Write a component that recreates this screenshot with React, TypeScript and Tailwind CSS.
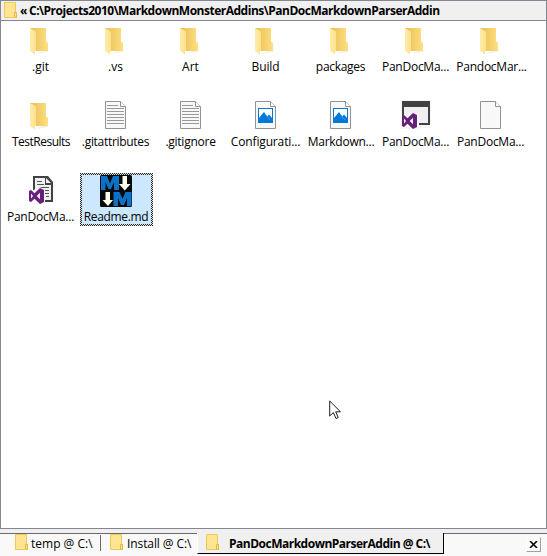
import React from "react";

type Kind = "folder" | "text" | "image" | "solution" | "blank" | "project" | "monster";

const items: { name: string; kind: Kind; spacing: string }[] = [
  { name: ".git", kind: "folder", spacing: "tracking-[0px]" },
  { name: ".vs", kind: "folder", spacing: "tracking-[0px]" },
  { name: "Art", kind: "folder", spacing: "tracking-[0px]" },
  { name: "Build", kind: "folder", spacing: "tracking-[-0.1px]" },
  { name: "packages", kind: "folder", spacing: "tracking-[-0.3px]" },
  { name: "PanDocMa...", kind: "folder", spacing: "tracking-[-0.25px]" },
  { name: "PandocMar...", kind: "folder", spacing: "tracking-[-0.25px] pl-0.5" },
  { name: "TestResults", kind: "folder", spacing: "tracking-[-0.5px] pl-px" },
  { name: ".gitattributes", kind: "text", spacing: "tracking-[-0.3px]" },
  { name: ".gitignore", kind: "text", spacing: "tracking-[-0.25px]" },
  { name: "Configurati...", kind: "image", spacing: "tracking-[-0.15px]" },
  { name: "Markdown...", kind: "image", spacing: "tracking-[-0.25px] pl-px" },
  { name: "PanDocMa...", kind: "solution", spacing: "tracking-[-0.25px]" },
  { name: "PanDocMa...", kind: "blank", spacing: "tracking-[-0.25px]" },
  { name: "PanDocMa...", kind: "project", spacing: "tracking-[-0.25px]" },
  { name: "Readme.md", kind: "monster", spacing: "tracking-[-0.35px] pl-px" },
];

function Sheet() {
  return (
    <>
      <path d="M5.5 1.5H20.5L25.5 6.5V28.5H5.5Z" fill="#f8f8f8" stroke="#929292" />
      <path d="M20.5 1.5V6.5H25.5" fill="#fff" stroke="#929292" />
    </>
  );
}

function Ribbon() {
  return (
    <path
      fillRule="evenodd"
      fill="#68217a"
      d="M13 13L17 15V27L13 29L7.5 23.8L4 27L2 26V16L4 15L7.5 18.2ZM13 17.8L9.7 21L13 24.2ZM4 18.5V23.5L6 21Z"
    />
  );
}

function ItemIcon({ kind }: { kind: Kind }) {
  return (
    <svg viewBox="0 0 32 32" className="ml-5 block size-8 shrink-0">
      {kind === "folder" && (
        <>
          <defs>
            <linearGradient id="back" x1="0" x2="1">
              <stop offset="0" stopColor="#e6bd55" />
              <stop offset="1" stopColor="#ffdf80" />
            </linearGradient>
            <linearGradient id="flap" x1="0" x2="1">
              <stop offset="0" stopColor="#ffebaa" />
              <stop offset="1" stopColor="#ffe18c" />
            </linearGradient>
          </defs>
          <path d="M11 29L17 26H24L23 27Z" fill="#f3f1eb" />
          <path d="M5 3H21V16.5L23 18V26H5Z" fill="url(#back)" />
          <path d="M5 3L10.5 6.2L11 7V26L10 26.5V29.5L5 26Z" fill="url(#flap)" />
        </>
      )}
      {(kind === "text" || kind === "image" || kind === "blank") && <Sheet />}
      {kind === "text" && (
        <path
          d="M7 5.5H18M7 8.5H24M7 11.5H24M7 14.5H24M7 17.5H24M7 20.5H24M7 23.5H24"
          stroke="#999"
          fill="none"
        />
      )}
      {kind === "image" && (
        <>
          <path d="M8 8H23V23H8Z" fill="#0078d7" />
          <path d="M9 9H22V18L19 14.5L17.3 16.5L14 12L9 18Z" fill="#fff" />
          <path d="M15 14L20 20" stroke="#63aee8" strokeWidth=".7" />
        </>
      )}
      {kind === "solution" && (
        <>
          <path d="M1 0H31V28H1Z" fill="#f6f6f6" />
          <path d="M2 6H30V25H2Z" fill="#424242" />
          <path d="M4 6H28V23H4Z" fill="#f0eff1" />
          <path d="M2 1H30V7H2Z" fill="#424242" />
          <path d="M1 17L12 11H19V29H1Z" fill="#f6f6f6" />
          <path d="M4 7H28V13H4Z" fill="#f0eff1" />
          <path d="M2 6H4V15H2Z" fill="#424242" />
          <Ribbon />
        </>
      )}
      {kind === "project" && (
        <>
          <path d="M8 1H23L28 7V27H14V17H8Z" fill="#424242" />
          <path d="M10 3H20V10H26V25H10Z" fill="#f0eff1" />
          <path d="M21 3L26 8H21Z" fill="#f0eff1" />
          <path d="M12 6.5H17M12 9.5H19M14 12.5H24M17 15.5H24M20 18.5H24M21 21.5H24" stroke="#555" />
          <path d="M4 17L15 12L20 15V27L15 30H7Z" fill="#f6f6f6" />
          <g transform="translate(2 0)">
            <Ribbon />
          </g>
        </>
      )}
      {kind === "monster" && (
        <>
          <rect y="0" width="32" height="32" rx="1.5" fill="#080b0d" />
          <path d="M1 15V1H7L10 8.5L13 1H19V15H14V7L11 14H8.5L5.5 7V15Z" fill="#0f71c5" />
          <path d="M13.5 31V17H19.5L22.5 24L25.5 17H31.5V31H27V23L24 30H21L18 23V31Z" fill="#0f71c5" />
          <path d="M22.5 1H27V9H30.5L24.8 15.5L19 9H22.5Z" fill="#ffffea" />
          <path d="M5.5 17H10V25H13L8 31L2.5 25H5.5Z" fill="#ffffea" />
        </>
      )}
    </svg>
  );
}

function SmallFolder() {
  return (
    <svg viewBox="0 0 14 16" className="-mt-0.5 block h-4 w-3.5 shrink-0">
      <path d="M.5.5H11.5V10.5H12.5V15.5H.5Z" fill="#ffe593" stroke="#edca55" />
      <path d="M10.5 15V10.5H12.5V15.5Z" fill="#ffe593" stroke="#e4b93e" />
    </svg>
  );
}

export default function App() {
  return (
    <div className="flex h-[556px] w-[547px] flex-col overflow-hidden bg-[#f0f0f0] font-['Open_Sans','Noto_Sans',sans-serif] text-[12px] leading-4 text-black">
      <main className="h-[529px] shrink-0 border border-[#828790] bg-white">
        <header className="flex h-5 items-center border-b border-[#828790] bg-[#f0f0f0] pl-[3px] font-bold">
          <SmallFolder />
          <span className="ml-0.5 w-[9px] pt-px">«</span>
          <span className="pt-px whitespace-nowrap tracking-[-0.49px]">
            C:\Projects2010\MarkdownMonsterAddins\PanDocMarkdownParserAddin
          </span>
        </header>
        <div className="grid grid-cols-[repeat(7,73px)] gap-x-0.5 gap-y-[23px] pt-0.5 pl-1">
          {items.map((item, i) => (
            <div
              key={i}
              className={`relative h-[53px] w-[73px] -mb-px pt-0.5 ${item.kind === "monster" ? "bg-[#cce8ff]" : ""}`}
            >
              <ItemIcon kind={item.kind} />
              <div className={`mt-0.5 mr-0.5 flex justify-center whitespace-nowrap ${item.spacing}`}>
                <span>{item.name}</span>
              </div>
              {item.kind === "monster" && (
                <svg className="absolute inset-0" width="73" height="53">
                  <path d="M0 .5H73M0 52.5H73M.5 0V53M72.5 0V53" stroke="#332010" strokeDasharray="1 1" />
                  <path d="M1 1.5H72M1 51.5H72M1.5 1V52M71.5 1V52" stroke="#332010" strokeDasharray="1 1" />
                </svg>
              )}
            </div>
          ))}
        </div>
      </main>
      <footer className="mt-1 flex h-[23px] border-t border-[#696969] bg-[#f9f9f9]">
        <div className="flex w-[100px] items-start pt-0.5 pl-[15px]">
          <SmallFolder />
          <span className="ml-0.5 whitespace-nowrap">temp @ C:\</span>
        </div>
        <div className="mt-px h-4 w-px bg-[#696969]" />
        <div className="flex w-24 items-start pt-0.5 pl-[9px]">
          <SmallFolder />
          <span className="ml-[3px] whitespace-nowrap tracking-[-0.1px]">Install @ C:\</span>
        </div>
        <div className="-mt-px flex h-[21px] w-[247px] items-start border-r border-b border-l border-r-black border-b-black border-l-white bg-[#f0f0f0] pt-[3px] pl-2 font-bold">
          <SmallFolder />
          <span className="ml-[9px] whitespace-nowrap tracking-[-0.5px]">PanDocMarkdownParserAddin @ C:\</span>
        </div>
        <button className="mt-[3px] ml-[82px] flex h-[15px] w-[15px] items-center justify-center border border-white border-r-[#a0a0a0] border-b-[#a0a0a0] bg-[#f9f9f9]">
          <svg width="9" height="7" viewBox="0 0 9 7">
            <path d="M1 0L8 7M8 0L1 7" stroke="#000" strokeWidth="1.6" />
          </svg>
        </button>
      </footer>
      <svg className="absolute top-[400px] left-[329px]" width="13" height="20" viewBox="0 0 13 20">
        <path
          d="M.7 1V16L4.3 12.6L7 18.5L9.2 17.5L6.7 11.8H11.5Z"
          fill="#fff"
          stroke="#1c1c24"
          strokeWidth="1"
        />
      </svg>
    </div>
  );
}
